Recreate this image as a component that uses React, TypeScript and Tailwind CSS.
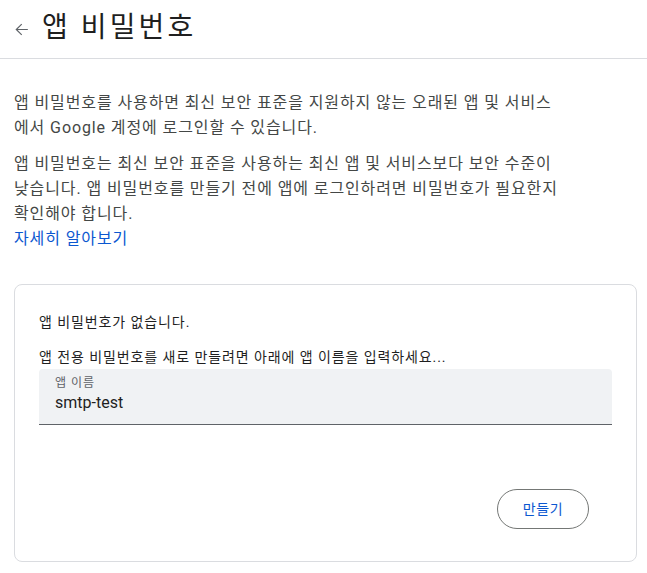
import React from "react";

export default function App() {
  const font = { fontFamily: '"Roboto", "Noto Sans CJK KR", sans-serif' };
  return (
    <div className="w-[647px] h-[573px] bg-white text-[#1f1f1f] overflow-hidden" style={font}>
      <div className="h-[59px] flex items-center border-b border-[#dadce0]">
        <div className="w-[42px] flex justify-center pl-[1px]">
          <svg width="19" height="19" viewBox="0 0 24 24" fill="#5f6368">
            <path d="M20 11.25H7.2l5.6-5.6L11.75 4.6 4.35 12l7.4 7.4 1.05-1.05-5.6-5.6H20v-1.5z" />
          </svg>
        </div>
        <h1 className="text-[28px] leading-none tracking-[0.11em] text-[#1f1f1f] pb-[2px]">앱 비밀번호</h1>
      </div>
      <div className="px-[14px] pt-[31px]">
        <p className="text-[16px] leading-[25px] tracking-[0.056em] text-[#444746]">
          앱 비밀번호를 사용하면 최신 보안 표준을 지원하지 않는 오래된 앱 및 서비스
          <br />
          에서 Google 계정에 로그인할 수 있습니다.
        </p>
        <p className="text-[16px] leading-[25px] tracking-[0.056em] text-[#444746] mt-[11px]">
          앱 비밀번호는 최신 보안 표준을 사용하는 최신 앱 및 서비스보다 보안 수준이
          <br />
          낮습니다. 앱 비밀번호를 만들기 전에 앱에 로그인하려면 비밀번호가 필요한지
          <br />
          확인해야 합니다.
          <br />
          <span className="text-[#0b57d0]">자세히 알아보기</span>
        </p>
        <div className="mt-[33px] w-[623px] h-[278px] border border-[#dadce0] rounded-[8px] px-[24px] pt-[27px]">
          <p className="text-[14px] leading-[20px] tracking-[0.065em] text-[#1f1f1f]">앱 비밀번호가 없습니다.</p>
          <p className="text-[14px] leading-[20px] tracking-[0.065em] text-[#1f1f1f] mt-[15px]">
            앱 전용 비밀번호를 새로 만들려면 아래에 앱 이름을 입력하세요...
          </p>
          <div className="mt-[2px] h-[56px] bg-[#f0f2f4] rounded-t-[4px] border-b border-[#5f6368] px-[16px] pt-[6px]">
            <div className="text-[12px] leading-[16px] tracking-[0.08em] text-[#5f6368]">앱 이름</div>
            <div className="text-[16px] leading-[22px] text-[#1f1f1f] mt-[1px]">smtp-test</div>
          </div>
          <div className="flex justify-end mt-[64px] pr-[23px]">
            <button className="w-[92px] h-[40px] rounded-full border border-[#747775] text-[14px] tracking-[0.05em] text-[#0b57d0] bg-white">
              만들기
            </button>
          </div>
        </div>
      </div>
    </div>
  );
}
